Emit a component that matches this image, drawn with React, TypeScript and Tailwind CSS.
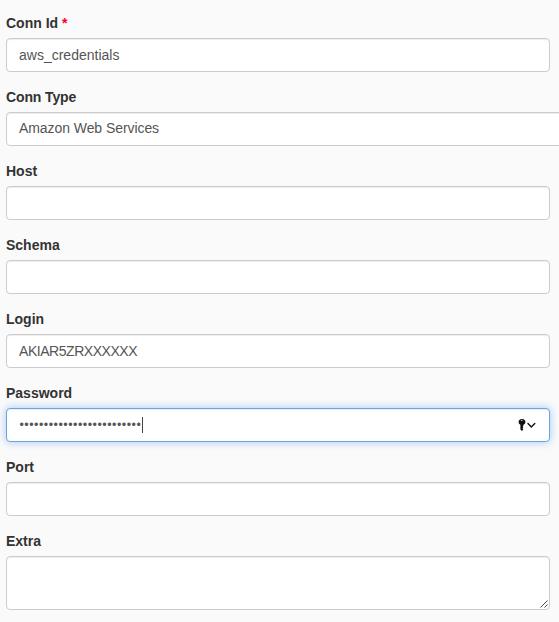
import type { ReactNode } from "react";

const box =
  "flex h-[34px] items-center rounded-[4px] border bg-white px-3 text-[14px] leading-5 text-[#555]";
const idle = "border-[#ccc] shadow-[inset_0_1px_1px_rgba(0,0,0,0.075)]";
const focused =
  "border-[#66a5e9] shadow-[inset_0_1px_1px_rgba(0,0,0,0.075),0_0_8px_rgba(102,165,233,0.6)]";

function Field({
  label,
  required,
  labelClass = "",
  children,
}: {
  label: string;
  required?: boolean;
  labelClass?: string;
  children: ReactNode;
}) {
  return (
    <div className="mb-[15px]">
      <div className={`mb-[5px] h-5 text-[14px] font-bold leading-5 text-[#333] ${labelClass}`}>
        {label}
        {required && <span className="text-[#f5001d]"> *</span>}
      </div>
      {children}
    </div>
  );
}

function Input({ value = "", className = "w-[544px]" }: { value?: string; className?: string }) {
  return <input readOnly value={value} className={`${box} ${idle} outline-none ${className}`} />;
}

function PasswordInput() {
  return (
    <div className={`${box} ${focused} w-[544px]`}>
      <span className="w-[123px] whitespace-nowrap pl-[0.4px] text-[12.5px] tracking-[0.5px]">{"•".repeat(25)}</span>
      <span className="h-4 w-px bg-[#444]" />
      <svg className="ml-auto mr-[1px]" width="19" height="14" viewBox="0 0 19 14" fill="none">
        <path
          fillRule="evenodd"
          d="M5 1C3.100 1 1.600 2.300 1.600 4.100c0 1.300.7 2.200 1.800 2.700v4.800L4.900 13l1.500-1.500-.8-.9.8-1-.8-.9.8-.8V6.800C7.600 6.300 8.400 5.400 8.400 4.100 8.400 2.300 7 1 5 1Zm-.2.900a.8.6 0 1 1 0 1.200.8.6 0 0 1 0-1.200Z"
          fill="#111"
        />
        <path d="m11 5.500 3.300 3.400 3.500-3.400" stroke="#111" strokeWidth="1.400" strokeLinecap="round" strokeLinejoin="round" />
      </svg>
    </div>
  );
}

export default function App() {
  return (
    <main className="h-[622px] w-full overflow-hidden bg-[#fafafa] pl-1.5 pt-[13px] font-['Liberation_Sans',Arial,sans-serif]">
      <Field label="Conn Id" required>
        <Input value="aws_credentials" />
      </Field>
      <Field label="Conn Type" labelClass="tracking-[-0.12px]">
        <Input value="Amazon Web Services" className="w-[580px] pb-[2px] tracking-[-0.07px]" />
      </Field>
      <Field label="Host">
        <Input />
      </Field>
      <Field label="Schema">
        <Input />
      </Field>
      <Field label="Login">
        <Input value="AKIAR5ZRXXXXXX" className="w-[544px] tracking-[-0.46px]" />
      </Field>
      <Field label="Password">
        <PasswordInput />
      </Field>
      <Field label="Port">
        <Input />
      </Field>
      <Field label="Extra">
        <div className={`flex h-[54px] w-[544px] items-end justify-end rounded-[4px] border bg-white ${idle}`}>
          <svg className="mb-px mr-px" width="8" height="8" viewBox="0 0 8 8" fill="none" stroke="#444" strokeWidth="1">
            <path d="M.5 7.500 7.500.5M4.500 7.500l3-3" />
          </svg>
        </div>
      </Field>
    </main>
  );
}
